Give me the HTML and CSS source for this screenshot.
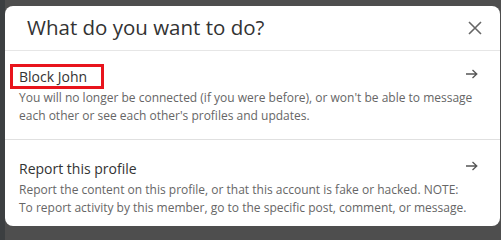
FILE: index.html
```html
<!DOCTYPE html>
<html>
<head>
<meta charset="utf-8">
<link rel="stylesheet" href="styles.css">
</head>
<body>
<div class="dialog">
  <div class="header">
    <h2 class="heading">What do you want to do?</h2>
    <button class="close" aria-label="Dismiss">
      <svg width="14" height="14" viewBox="0 0 14 14"><path d="M1 1 L13 13 M13 1 L1 13" stroke="#666" stroke-width="1.6" fill="none"/></svg>
    </button>
  </div>
  <div class="item first">
    <div class="text">
      <div class="title highlighted">Block John</div>
      <div class="desc">You will no longer be connected (if you were before), or won't be able to message each other or see each other's profiles and updates.</div>
    </div>
    <svg class="arrow" width="12" height="10" viewBox="0 0 12 10"><path d="M0 5 H10.5 M6.5 1 L10.8 5 L6.5 9" stroke="#555" stroke-width="1.3" fill="none"/></svg>
  </div>
  <div class="item second">
    <div class="text">
      <div class="title">Report this profile</div>
      <div class="desc">Report the content on this profile, or that this account is fake or hacked. NOTE: To report activity by this member, go to the specific post, comment, or message.</div>
    </div>
    <svg class="arrow" width="12" height="10" viewBox="0 0 12 10"><path d="M0 5 H10.5 M6.5 1 L10.8 5 L6.5 9" stroke="#555" stroke-width="1.3" fill="none"/></svg>
  </div>
</div>
</body>
</html>
```

FILE: styles.css
```css
html, body {
  margin: 0;
  padding: 0;
  width: 501px;
  height: 231px;
  overflow: hidden;
}
body {
  background: linear-gradient(90deg, #3c3f41 0, #3c3f41 5px, #4e4e4e 5px);
  font-family: "Open Sans", "Noto Sans", sans-serif;
}
.dialog {
  margin: 6px 0 0 5px;
  width: 495px;
  height: 220px;
  background: #fff;
  border-radius: 8px;
  overflow: hidden;
}
.header {
  height: 44px;
  display: flex;
  align-items: center;
  justify-content: space-between;
  padding: 0 18px 0 22px;
  border-bottom: 1px solid #e6e6e6;
}
.heading {
  margin: 0;
  margin-top: -2px;
  font-size: 20.5px;
  font-weight: 400;
  color: #333;
}
.close {
  border: 0;
  background: none;
  padding: 0;
  display: flex;
  width: 14px;
  height: 14px;
}
.item {
  display: flex;
  align-items: flex-start;
  justify-content: space-between;
  padding: 13px 22px 14px 5px;
}
.item.first {
  border-bottom: 1px solid #e0e0e0;
}
.item.second {
  padding-top: 16px;
}
.title {
  display: inline-block;
  font-size: 14px;
  line-height: 19px;
  color: #333;
  padding: 0 6px;
  border: 3px solid transparent;
}
.title.highlighted {
  border-color: #e8141c;
  padding-right: 14px;
}
.desc {
  font-size: 12px;
  line-height: 18px;
  color: #666;
  padding-left: 9px;
  width: 456px;
  margin-right: -30px;
}
.arrow {
  margin-top: 5px;
  flex: none;
}
```
